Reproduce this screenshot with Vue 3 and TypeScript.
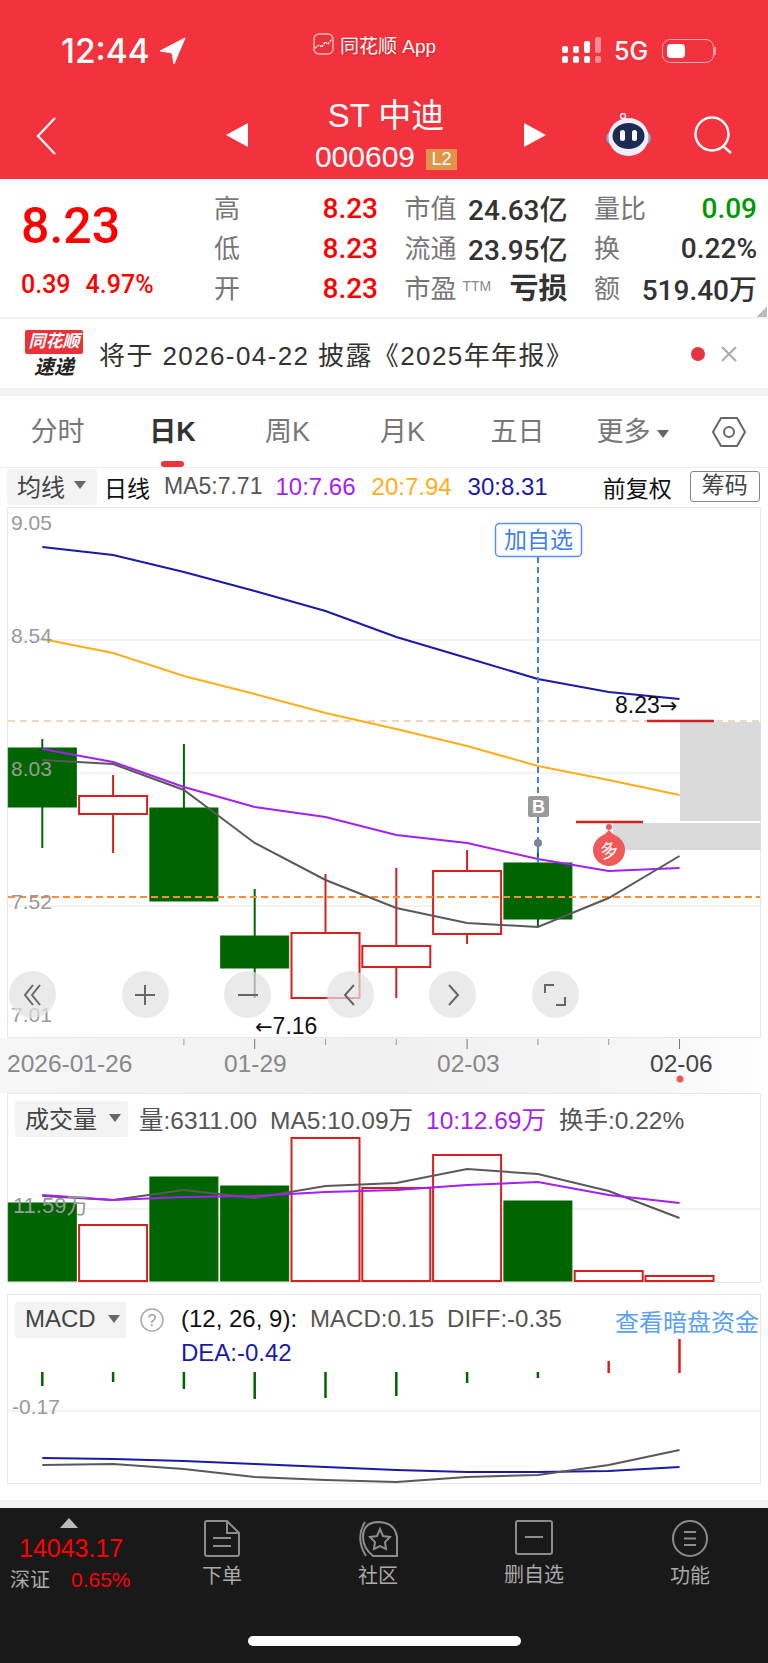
<template>
  <div class="page">
    <!-- red header -->
    <header class="header">
      <div class="status">
        <div class="time">
          <span>12:44</span>
          <svg width="27" height="28" viewBox="0 0 27 28"><path d="M26 1 L1 14 L13 16 L15 27 Z" fill="#fff" stroke="#fff" stroke-linejoin="round" /></svg>
        </div>
        <div class="app-name">
          <svg width="21" height="22" viewBox="0 0 21 22">
            <rect x="1" y="1" width="19" height="20" rx="5" fill="#e8333a" stroke="#f9b5b8" stroke-width="1.5" />
            <path d="M2 15 L6 12 L9 14 L12 9 L15 11 L19 6" fill="none" stroke="#fff" stroke-width="1.3" stroke-dasharray="2 1" />
          </svg>
          <span>同花顺 App</span>
        </div>
        <div class="status-right">
          <svg width="40" height="28" viewBox="0 0 40 28">
            <rect x="0" y="9" width="6" height="7" rx="2" fill="#fff" />
            <rect x="0" y="19" width="6" height="7" rx="2" fill="#fff" />
            <rect x="11" y="9" width="6" height="7" rx="2" fill="#fff" />
            <rect x="11" y="19" width="6" height="7" rx="2" fill="#fff" />
            <rect x="22" y="4" width="6" height="12" rx="2" fill="#fff" />
            <rect x="22" y="19" width="6" height="7" rx="2" fill="#fff" />
            <rect x="33" y="0" width="6" height="16" rx="2" fill="#fff" opacity=".45" />
            <rect x="33" y="19" width="6" height="7" rx="2" fill="#fff" opacity=".45" />
          </svg>
          <span class="net">5G</span>
          <div class="battery"><div class="battery-fill"></div></div>
          <div class="battery-nub"></div>
        </div>
      </div>
      <div class="nav">
        <svg class="back" width="20" height="38" viewBox="0 0 20 38"><path d="M19 1 L2 19 L19 37" fill="none" stroke="#fff" stroke-width="2.2" /></svg>
        <svg width="22" height="24" viewBox="0 0 22 24"><path d="M22 0 V24 L0 12 Z" fill="#fff" /></svg>
        <div class="title-block">
          <div class="title">ST 中迪</div>
          <div class="code">000609<span class="l2">L2</span></div>
        </div>
        <svg width="22" height="24" viewBox="0 0 22 24"><path d="M0 0 V24 L22 12 Z" fill="#fff" /></svg>
        <svg class="robot" width="47" height="44" viewBox="0 0 47 44">
          <circle cx="18" cy="3" r="2.5" fill="none" stroke="#e6e6f5" stroke-width="1.5" />
          <rect x="1" y="18" width="45" height="14" rx="7" fill="#8f9bd8" />
          <ellipse cx="23.5" cy="24" rx="20" ry="19" fill="#eceffb" />
          <ellipse cx="23.5" cy="23" rx="16" ry="13" fill="#1f2a52" />
          <rect x="15" y="17" width="5" height="11" rx="2.5" fill="#fff" />
          <rect x="27" y="17" width="5" height="11" rx="2.5" fill="#fff" />
        </svg>
        <svg class="search" width="39" height="38" viewBox="0 0 39 38">
          <circle cx="18" cy="18" r="16.5" fill="none" stroke="#fff" stroke-width="2.4" />
          <path d="M29 30 L37 37" stroke="#fff" stroke-width="2.4" />
        </svg>
      </div>
    </header>

    <!-- quote summary -->
    <section class="stats">
      <div class="price-col">
        <div class="price">8.23</div>
        <div class="change"><span>0.39</span><span>4.97%</span></div>
      </div>
      <div class="stat-grid">
        <div v-for="cell in cells" :key="cell.label" class="cell">
          <span class="cell-label">{{ cell.label }}<small v-if="cell.sub">{{ cell.sub }}</small></span>
          <span class="cell-value" :class="cell.cls">{{ cell.value }}</span>
        </div>
      </div>
      <div class="corner"></div>
    </section>

    <section class="notice">
      <div class="notice-logo">
        <div class="notice-tag">同花顺</div>
        <div class="notice-sub">速递</div>
      </div>
      <div class="notice-text">将于 2026-04-22 披露《2025年年报》</div>
      <div class="notice-dot"></div>
      <svg width="16" height="16" viewBox="0 0 16 16"><path d="M1 1 L15 15 M15 1 L1 15" stroke="#aaa" stroke-width="2" /></svg>
    </section>

    <nav class="tabs">
      <div v-for="tab in tabs" :key="tab" class="tab" :class="{ active: tab === '日K' }">
        <div class="tab-label">{{ tab }}<i v-if="tab === '更多'" class="tri"></i></div>
        <div class="tab-bar"></div>
      </div>
      <div class="tab-gear">
        <svg width="36" height="32" viewBox="0 0 36 32">
          <path d="M10 2 H26 L34 16 L26 30 H10 L2 16 Z" fill="none" stroke="#666" stroke-width="2" />
          <circle cx="18" cy="16" r="5" fill="none" stroke="#666" stroke-width="2" />
        </svg>
      </div>
    </nav>

    <div class="toolbar">
      <div class="pick pick-ma">均线<i class="tri"></i></div>
      <span class="tb-day">日线</span>
      <span class="ma ma-first c-gray">MA5:7.71</span>
      <span class="ma ma-second c-purple">10:7.66</span>
      <span class="ma c-orange">20:7.94</span>
      <span class="ma c-navy">30:8.31</span>
      <span class="tb-adj">前复权</span>
      <div class="chips">筹码</div>
    </div>

    <!-- main k line -->
    <div class="box box-main">
      <svg class="chart" width="752" height="529" viewBox="8 508 752 529">
        <line x1="8" x2="760" y1="640" y2="640" class="grid" />
        <line x1="8" x2="760" y1="773" y2="773" class="grid" />
        <line x1="8" x2="760" y1="906" y2="906" class="grid" />
        <rect x="680" y="722" width="81" height="99" fill="#dadada" />
        <rect x="613" y="823" width="148" height="27" fill="#dadada" />
        <line x1="8" x2="760" y1="721" y2="721" stroke="#e8cba8" stroke-width="1.5" stroke-dasharray="7 5" />

        <g v-for="c in candles" :key="c.i">
          <line :x1="xAt(c.i)" :x2="xAt(c.i)" :y1="c.hi" :y2="c.lo" :stroke="c.up ? red : green" stroke-width="2" />
          <rect
            :x="xAt(c.i) - 34" :y="c.top" width="68" :height="c.bot - c.top"
            :fill="c.up ? '#fff' : green" :stroke="c.up ? red : green" :stroke-width="c.up ? 2 : 1"
          />
        </g>
        <line x1="576" x2="643" y1="822" y2="822" :stroke="red" stroke-width="2.5" />
        <line x1="647" x2="714" y1="721" y2="721" :stroke="red" stroke-width="2.5" />

        <line x1="8" x2="760" y1="897" y2="897" stroke="#ff8c2e" stroke-width="2" stroke-dasharray="7 4" />

        <polyline :points="pts(ma30)" class="ln" stroke="#1a1aa8" />
        <polyline :points="pts(ma20)" class="ln" stroke="#ffae1a" />
        <polyline :points="pts(ma10)" class="ln" stroke="#a31ff5" />
        <polyline :points="pts(ma5)" class="ln" stroke="#595959" />

        <text x="11" y="530" class="axis">9.05</text>
        <text x="11" y="643" class="axis">8.54</text>
        <text x="11" y="776" class="axis">8.03</text>
        <text x="11" y="909" class="axis">7.52</text>
        <text x="11" y="1022" class="axis">7.01</text>

        <line x1="538" x2="538" y1="557" y2="863" stroke="#3f7ff2" stroke-width="2" stroke-dasharray="6 4" />
        <rect x="495.5" y="523.5" width="86" height="33" rx="4" fill="#fff" stroke="#5a90f2" stroke-width="1.5" />
        <text x="538.5" y="548" class="tag">加自选</text>
        <rect x="528" y="796" width="21" height="21" rx="2" fill="#9a9a9a" />
        <text x="538.5" y="813" class="b-mark">B</text>
        <circle cx="538" cy="843" r="4" fill="#7a8596" />

        <circle cx="609" cy="827" r="3" fill="#ee5a5a" />
        <circle cx="609" cy="850" r="16" fill="#ee5a5a" />
        <path d="M603 836 L609 830 L615 836 Z" fill="#ee5a5a" />
        <text x="609" y="857" class="duo" transform="rotate(-15 609 850)">多</text>

        <text x="615" y="713" class="pin">8.23<tspan class="arrow">→</tspan></text>
        <text x="255" y="1034" class="pin"><tspan class="arrow">←</tspan>7.16</text>
      </svg>
      <div class="tools">
        <div v-for="t in tools" :key="t.name" class="tool">
          <svg width="26" height="26" viewBox="0 0 26 26" fill="none" stroke="#666" stroke-width="2">
            <path :d="t.d" />
          </svg>
        </div>
      </div>
    </div>

    <div class="date-axis">
      <svg width="768" height="56" viewBox="0 1037 768 56">
        <line v-for="i in minorTicks" :key="i" :x1="xAt(i)" :x2="xAt(i)" y1="1038" y2="1044" stroke="#999" />
        <line v-for="i in majorTicks" :key="i" :x1="xAt(i)" :x2="xAt(i)" y1="1038" y2="1048" stroke="#777" />
        <text x="7" y="1071" class="date">2026-01-26</text>
        <text x="224" y="1071" class="date">01-29</text>
        <text x="437" y="1071" class="date">02-03</text>
        <text x="650" y="1071" class="date date-now">02-06</text>
        <circle cx="680" cy="1078" r="3.5" fill="#f0555a" />
      </svg>
    </div>

    <!-- volume -->
    <div class="box box-vol">
      <div class="sub-head">
        <div class="pick pick-vol">成交量<i class="tri"></i></div>
        <span class="sub-text sub-wide c-gray">量:6311.00</span>
        <span class="sub-text sub-wide c-gray">MA5:10.09万</span>
        <span class="sub-text sub-wide c-purple">10:12.69万</span>
        <span class="sub-text sub-wide c-gray">换手:0.22%</span>
      </div>
      <svg class="chart" width="752" height="144" viewBox="8 1138 752 144">
        <line x1="8" x2="760" y1="1209" y2="1209" class="grid" />
        <rect
          v-for="(top, i) in volTops" :key="i"
          :x="xAt(i) - 34" :y="top" width="68" :height="1281 - top"
          :fill="volUp[i] ? '#fff' : green" :stroke="volUp[i] ? red : green" :stroke-width="volUp[i] ? 2 : 1"
        />
        <polyline :points="pts(volMa5)" class="ln" stroke="#595959" />
        <polyline :points="pts(volMa10)" class="ln" stroke="#a31ff5" />
        <text x="13" y="1213" class="axis axis-vol">11.59万</text>
      </svg>
    </div>

    <!-- macd -->
    <div class="box box-macd">
      <div class="sub-head">
        <div class="pick pick-macd">MACD<i class="tri"></i></div>
        <svg class="help" width="24" height="24" viewBox="0 0 24 24">
          <circle cx="12" cy="12" r="11" fill="none" stroke="#aaa" stroke-width="1.5" />
          <text x="12" y="18" class="help-q">?</text>
        </svg>
        <span class="sub-text c-black">(12, 26, 9):</span>
        <span class="sub-text c-gray">MACD:0.15</span>
        <span class="sub-text c-gray">DIFF:-0.35</span>
        <span class="link">查看暗盘资金</span>
      </div>
      <svg class="chart" width="752" height="144" viewBox="8 1339 752 144">
        <line x1="8" x2="760" y1="1411" y2="1411" class="grid" />
        <line
          v-for="(y, i) in macdEnds" :key="i"
          :x1="xAt(i)" :x2="xAt(i)" :y1="y < 1372 ? y : 1372" :y2="y < 1372 ? 1373 : y"
          :stroke="y < 1372 ? red : green" stroke-width="2.5"
        />
        <polyline :points="pts(dea)" class="ln" stroke="#1a1aa8" />
        <polyline :points="pts(diff)" class="ln" stroke="#595959" />
        <text x="181" y="1361" class="dea">DEA:-0.42</text>
        <text x="12" y="1414" class="axis">-0.17</text>
      </svg>
    </div>

    <div class="spacer"></div>

    <!-- bottom bar -->
    <footer class="footer">
      <div class="foot-row">
        <div class="index">
          <i class="index-tri"></i>
          <div class="index-val">14043.17</div>
          <div class="index-line"><span>深证</span><b>0.65%</b></div>
        </div>
        <div class="foot-tab foot-a">
          <svg width="36" height="37" viewBox="0 0 36 37" fill="none" stroke="#8c8c8c" stroke-width="2">
            <path d="M3 1 H23 L35 13 V34 Q35 36 33 36 H3 Q1 36 1 34 V3 Q1 1 3 1 Z M23 1 V13 H35" />
            <path d="M9 18 H27 M9 26 H27" />
          </svg>
          <span>下单</span>
        </div>
        <div class="foot-tab foot-b">
          <svg width="42" height="37" viewBox="0 0 42 37" fill="none" stroke="#8c8c8c" stroke-width="2">
            <path d="M8 2 Q-2 18 9 36" />
            <path d="M16 36 Q6 28 6 17 Q6 3 20 2 Q38 2 40 17 V36 Z" />
            <path d="M23 9 L26 16 L33 17 L28 22 L29 29 L23 26 L17 29 L18 22 L13 17 L20 16 Z" />
          </svg>
          <span>社区</span>
        </div>
        <div class="foot-tab foot-c">
          <svg width="38" height="36" viewBox="0 0 38 36" fill="none" stroke="#8c8c8c" stroke-width="2">
            <rect x="1" y="1" width="36" height="33" rx="2" />
            <path d="M10 17 H28" />
          </svg>
          <span>删自选</span>
        </div>
        <div class="foot-tab foot-d">
          <svg width="36" height="37" viewBox="0 0 36 37" fill="none" stroke="#8c8c8c" stroke-width="2">
            <ellipse cx="18" cy="18.5" rx="17" ry="17.5" />
            <path d="M12 12 H24 M12 18.5 H24 M12 25 H24" />
          </svg>
          <span>功能</span>
        </div>
      </div>
      <div class="home-bar"></div>
    </footer>
  </div>
</template>

<script setup lang="ts">
const red = "#d81e1e";
const green = "#006400";

// candle slots are evenly spaced
const xAt = (i: number) => 42.3 + 70.8 * i;
const pts = (ys: number[]) => ys.map((y, i) => `${xAt(i)},${y}`).join(" ");

const cells = [
  { label: "高", value: "8.23", cls: "c-red" },
  { label: "市值", value: "24.63亿", cls: "" },
  { label: "量比", value: "0.09", cls: "c-green" },
  { label: "低", value: "8.23", cls: "c-red" },
  { label: "流通", value: "23.95亿", cls: "" },
  { label: "换", value: "0.22%", cls: "" },
  { label: "开", value: "8.23", cls: "c-red" },
  { label: "市盈", sub: "TTM", value: "亏损", cls: "loss" },
  { label: "额", value: "519.40万", cls: "" },
];

const tabs = ["分时", "日K", "周K", "月K", "五日", "更多"];

const candles = [
  { i: 0, up: false, top: 748, bot: 807, hi: 739, lo: 848 },
  { i: 1, up: true, top: 796, bot: 814, hi: 775, lo: 853 },
  { i: 2, up: false, top: 808, bot: 901, hi: 744, lo: 808 },
  { i: 3, up: false, top: 936, bot: 968, hi: 889, lo: 998 },
  { i: 4, up: true, top: 933, bot: 998, hi: 874, lo: 933 },
  { i: 5, up: true, top: 946, bot: 967, hi: 868, lo: 998 },
  { i: 6, up: true, top: 871, bot: 934, hi: 850, lo: 944 },
  { i: 7, up: false, top: 863, bot: 919, hi: 850, lo: 927 },
];

const ma30 = [547, 555, 572, 591, 611, 637, 658, 679, 692, 699];
const ma20 = [639, 653, 676, 694, 713, 729, 746, 766, 780, 795];
const ma10 = [749, 762, 787, 807, 817, 835, 843, 859, 871, 868];
const ma5 = [760, 764, 790, 843, 880, 908, 923, 927, 898, 856];

const tools = [
  { name: "first", d: "M13 3 L5 13 L13 23 M20 3 L12 13 L20 23" },
  { name: "plus", d: "M3 13 H23 M13 3 V23" },
  { name: "minus", d: "M3 13 H23" },
  { name: "prev", d: "M17 3 L8 13 L17 23" },
  { name: "next", d: "M9 3 L18 13 L9 23" },
  { name: "full", d: "M3 11 V3 H12 M23 15 V23 H14" },
];

const minorTicks = [2, 4, 5, 7, 8];
const majorTicks = [3, 6, 9];

const volTops = [1203, 1225, 1177, 1186, 1138, 1188, 1155, 1201, 1271, 1276];
const volUp = [false, true, false, false, true, true, true, false, true, true];
const volMa5 = [1196, 1200, 1190, 1198, 1186, 1183, 1169, 1174, 1191, 1218];
const volMa10 = [1195, 1200, 1197, 1196, 1192, 1190, 1185, 1182, 1195, 1203];

const macdEnds = [1386, 1382, 1389, 1399, 1398, 1396, 1383, 1378, 1361, 1339];
const dea = [1458, 1459, 1461, 1464, 1467, 1470, 1472, 1472, 1471, 1467];
const diff = [1465, 1464, 1469, 1477, 1480, 1482, 1477, 1475, 1465, 1450];
</script>

<style>
html,
body {
  margin: 0;
  background: #fff;
}
</style>

<style scoped>
.page {
  width: 768px;
  height: 1663px;
  overflow: hidden;
  background: #fff;
  font-family: "Liberation Sans", "Noto Sans CJK SC", sans-serif;
  color: #333;
}

/* header */
.header {
  height: 179px;
  background: #f2323c;
  color: #fff;
}
.status {
  height: 90px;
  display: flex;
  padding-left: 61px;
}
.time {
  width: 252px;
  padding-top: 31px;
  display: flex;
  align-items: flex-start;
  gap: 9px;
  font-family: Inter, sans-serif;
  font-size: 33.5px;
  font-weight: 500;
  line-height: 40px;
}
.time svg {
  margin-top: 6px;
}
.app-name {
  width: 249px;
  display: flex;
  align-items: center;
  gap: 6px;
  height: 88px;
  font-size: 19px;
  text-shadow: 0 1px 2px rgba(120, 0, 0, .4);
}
.status-right {
  display: flex;
  align-items: center;
  height: 102px;
}
.net {
  margin-left: 12px;
  font-family: Inter, sans-serif;
  font-size: 25px;
  font-weight: 500;
}
.battery {
  width: 52px;
  height: 24px;
  margin-left: 14px;
  padding: 4px;
  box-sizing: border-box;
  border: 1.5px solid rgba(255, 255, 255, .6);
  border-radius: 8px;
}
.battery-fill {
  width: 18px;
  height: 100%;
  background: #fff;
  border-radius: 4px;
}
.battery-nub {
  width: 2px;
  height: 8px;
  background: rgba(255, 255, 255, .5);
}
.nav {
  height: 89px;
  display: flex;
  align-items: center;
  padding-left: 36px;
}
.back {
  margin-right: 170px;
  margin-top: 2px;
}
.title-block {
  width: 276px;
  text-align: center;
}
.title {
  font-size: 33px;
  line-height: 38px;
}
.code {
  font-size: 30px;
  line-height: 30px;
  margin-top: 7px;
}
.l2 {
  display: inline-block;
  width: 31px;
  height: 21px;
  margin-left: 11px;
  background: #e09449;
  font-size: 18px;
  line-height: 21px;
  vertical-align: 2px;
}
.robot {
  margin-left: 59px;
}
.search {
  margin-left: 42px;
}

/* stats */
.stats {
  position: relative;
  height: 138px;
  display: flex;
}
.price-col {
  width: 193px;
  padding-left: 21px;
  color: #f00;
  font-family: Roboto, sans-serif;
  font-weight: 500;
}
.price {
  margin-top: 20px;
  font-size: 50px;
  line-height: 54px;
}
.change {
  margin-top: 18px;
  display: flex;
  gap: 15px;
  font-size: 25px;
  line-height: 28px;
  white-space: nowrap;
}
.stat-grid {
  width: 543px;
  margin-top: 9px;
  display: grid;
  grid-template-columns: 164px 163px 163px;
  grid-auto-rows: 40px;
  column-gap: 26.5px;
}
.cell {
  display: flex;
  justify-content: space-between;
  align-items: center;
  white-space: nowrap;
}
.cell-label {
  font-size: 26px;
  color: #777;
  margin-bottom: 4px;
}
.cell-label small {
  margin-left: 6px;
  font-size: 14px;
  vertical-align: 7px;
  color: #888;
}
.cell-value {
  font-family: Roboto, "Noto Sans CJK SC", sans-serif;
  font-weight: 500;
  font-size: 28px;
  color: #333;
}
.loss {
  font-size: 29px;
  font-weight: 700;
  margin-bottom: 5px;
}
.c-red {
  color: #f00;
}
.c-green {
  color: #090;
}
.corner {
  position: absolute;
  right: 1px;
  bottom: 0;
  width: 10px;
  height: 11px;
  background: linear-gradient(135deg, transparent 50%, #bbb 50%);
}

/* notice */
.notice {
  height: 69px;
  border-top: 2px solid #f3f3f3;
  border-bottom: 8px solid #f3f3f3;
  display: flex;
  align-items: center;
  padding-left: 25px;
}
.notice-logo {
  width: 58px;
  text-align: center;
  font-style: italic;
  font-weight: 700;
}
.notice-tag {
  background: #e8333a;
  color: #fff;
  font-size: 17px;
  line-height: 24px;
  border-radius: 2px;
}
.notice-sub {
  margin-top: 2px;
  font-size: 20px;
  line-height: 22px;
  color: #222;
}
.notice-text {
  margin-left: 16px;
  width: 607px;
  font-size: 26px;
  letter-spacing: 1.4px;
  color: #333;
  white-space: nowrap;
}
.notice-dot {
  width: 14px;
  height: 14px;
  border-radius: 50%;
  background: #ea3340;
  margin-right: 16px;
  margin-left: -15px;
}

/* tabs */
.tabs {
  height: 71px;
  display: flex;
  border-bottom: 1px solid #eee;
}
.tab {
  width: 115px;
  padding-top: 21px;
  box-sizing: border-box;
  display: flex;
  flex-direction: column;
  align-items: center;
}
.tab-label {
  height: 30px;
  line-height: 30px;
  font-size: 27px;
  color: #777;
  white-space: nowrap;
}
.tab.active .tab-label {
  color: #333;
  font-weight: 700;
}
.tab-bar {
  width: 23px;
  height: 6px;
  margin-top: 14px;
  border-radius: 3px;
}
.tab.active .tab-bar {
  background: #f2323c;
}
.tab-gear {
  width: 78px;
  padding-top: 20px;
  text-align: center;
}
.tri {
  display: inline-block;
  margin-left: 6px;
  vertical-align: 3px;
  border-left: 6px solid transparent;
  border-right: 6px solid transparent;
  border-top: 8px solid #666;
}

/* toolbar */
.toolbar {
  height: 37px;
  padding-bottom: 2px;
  display: flex;
  align-items: center;
  padding-left: 7px;
  white-space: nowrap;
}
.pick {
  background: #f3f3f3;
  border-radius: 3px;
  color: #444;
  font-size: 24px;
  display: flex;
  align-items: center;
  box-sizing: border-box;
  padding-bottom: 3px;
}
.pick .tri {
  margin-left: 12px;
  vertical-align: 0;
}
.pick-ma {
  width: 90px;
  height: 36px;
  padding-left: 10px;
}
.pick-ma .tri {
  margin-left: 9px;
}
.tb-day {
  margin-left: 7px;
  font-size: 23px;
  color: #111;
}
.ma {
  margin-left: 16px;
  font-size: 24px;
}
.ma-first {
  margin-left: 14px;
  font-size: 23px;
}
.ma-second {
  margin-left: 13px;
}
.c-gray {
  color: #555;
}
.c-purple {
  color: #a31ff5;
}
.c-orange {
  color: #ffae1a;
}
.c-navy {
  color: #1a1aa8;
}
.c-black {
  color: #111;
}
.tb-adj {
  margin-left: 55px;
  font-size: 23px;
  color: #111;
}
.chips {
  margin-left: 18px;
  width: 70px;
  height: 31px;
  box-sizing: border-box;
  border: 1px solid #888;
  border-radius: 3px;
  text-align: center;
  font-size: 23px;
  line-height: 26px;
  color: #444;
}

/* chart boxes */
.box {
  position: relative;
  width: 754px;
  margin-left: 7px;
  box-sizing: border-box;
  border: 1px solid #e8e8e8;
}
.box-main {
  height: 531px;
}
.chart {
  display: block;
  overflow: visible;
}
.grid {
  stroke: #efefef;
  stroke-width: 1.5;
}
.ln {
  fill: none;
  stroke-width: 2;
}
.axis {
  font-size: 21px;
  fill: #999;
}
.axis-vol {
  font-size: 22px;
}
.tag {
  font-size: 23px;
  fill: #3f7ff2;
  text-anchor: middle;
}
.b-mark {
  font-size: 18px;
  font-weight: 700;
  fill: #fff;
  text-anchor: middle;
}
.duo {
  font-size: 18px;
  fill: #fff;
  text-anchor: middle;
}
.pin {
  font-size: 23px;
  fill: #111;
}
.arrow {
  font-family: "DejaVu Sans", sans-serif;
  font-size: 21px;
}
.tools {
  position: absolute;
  left: 1px;
  top: 463px;
  display: flex;
  gap: 55.5px;
}
.tool {
  width: 47px;
  height: 47px;
  border-radius: 50%;
  background: rgba(226, 226, 226, .72);
  display: flex;
  align-items: center;
  justify-content: center;
}
.tool:first-child {
  margin-right: 10px;
}

.date-axis {
  height: 55px;
  background: linear-gradient(90deg, #f6f6f6 0%, #f0f0f0 50%, #f6f6f6 85%, #fff 100%);
}
.date-axis svg {
  display: block;
}
.date {
  font-size: 24.5px;
  fill: #888;
}
.date-now {
  fill: #444;
}

.box-vol {
  height: 190px;
}
.box-macd {
  height: 190px;
  margin-top: 11px;
}
.sub-head {
  display: flex;
  align-items: center;
  height: 44px;
  padding-left: 7px;
  white-space: nowrap;
  box-sizing: border-box;
  padding-top: 6px;
}
.pick-vol {
  width: 113px;
  height: 36px;
  padding-left: 10px;
}
.pick-macd {
  width: 111px;
  height: 36px;
  padding-left: 10px;
}
.sub-text {
  margin-left: 13px;
  font-size: 24px;
  padding-bottom: 2px;
}
.sub-wide {
  font-size: 24.5px;
}
.pick + .sub-text {
  margin-left: 11px;
}
.help {
  margin-left: 14px;
  margin-right: 4px;
}
.help-q {
  font-size: 16px;
  fill: #999;
  text-anchor: middle;
}
.link {
  margin-left: auto;
  margin-right: 1px;
  font-size: 24px;
  color: #5aa0f5;
}
.dea {
  font-size: 24px;
  fill: #1a1aa8;
}

.spacer {
  height: 16px;
  border-bottom: 8px solid #f3f3f3;
}

/* footer */
.footer {
  height: 155px;
  background: #191919;
  color: #aaa;
  position: relative;
}
.foot-row {
  display: flex;
  height: 128px;
}
.index {
  position: relative;
  width: 140px;
  padding-left: 10px;
  box-sizing: border-box;
}
.index-tri {
  display: block;
  width: 0;
  margin: 10px 0 0 50px;
  border-left: 9px solid transparent;
  border-right: 9px solid transparent;
  border-bottom: 10px solid #bbb;
}
.index-val {
  margin: 7px 0 0 9px;
  font-size: 25px;
  line-height: 26px;
  color: #f00;
}
.index-line {
  margin-top: 5px;
  display: flex;
  gap: 21px;
  font-size: 20px;
  line-height: 28px;
  white-space: nowrap;
}
.index-line b {
  font-weight: 400;
  font-size: 21px;
  color: #f00;
}
.foot-tab {
  position: absolute;
  top: 12px;
  transform: translateX(-50%);
  display: flex;
  flex-direction: column;
  align-items: center;
  gap: 3px;
  font-size: 20px;
  white-space: nowrap;
}
.foot-a {
  left: 222px;
}
.foot-b {
  left: 378px;
}
.foot-c {
  left: 534px;
}
.foot-d {
  left: 690px;
}
.home-bar {
  width: 273px;
  height: 10px;
  margin-left: 248px;
  border-radius: 5px;
  background: #fff;
}
</style>
